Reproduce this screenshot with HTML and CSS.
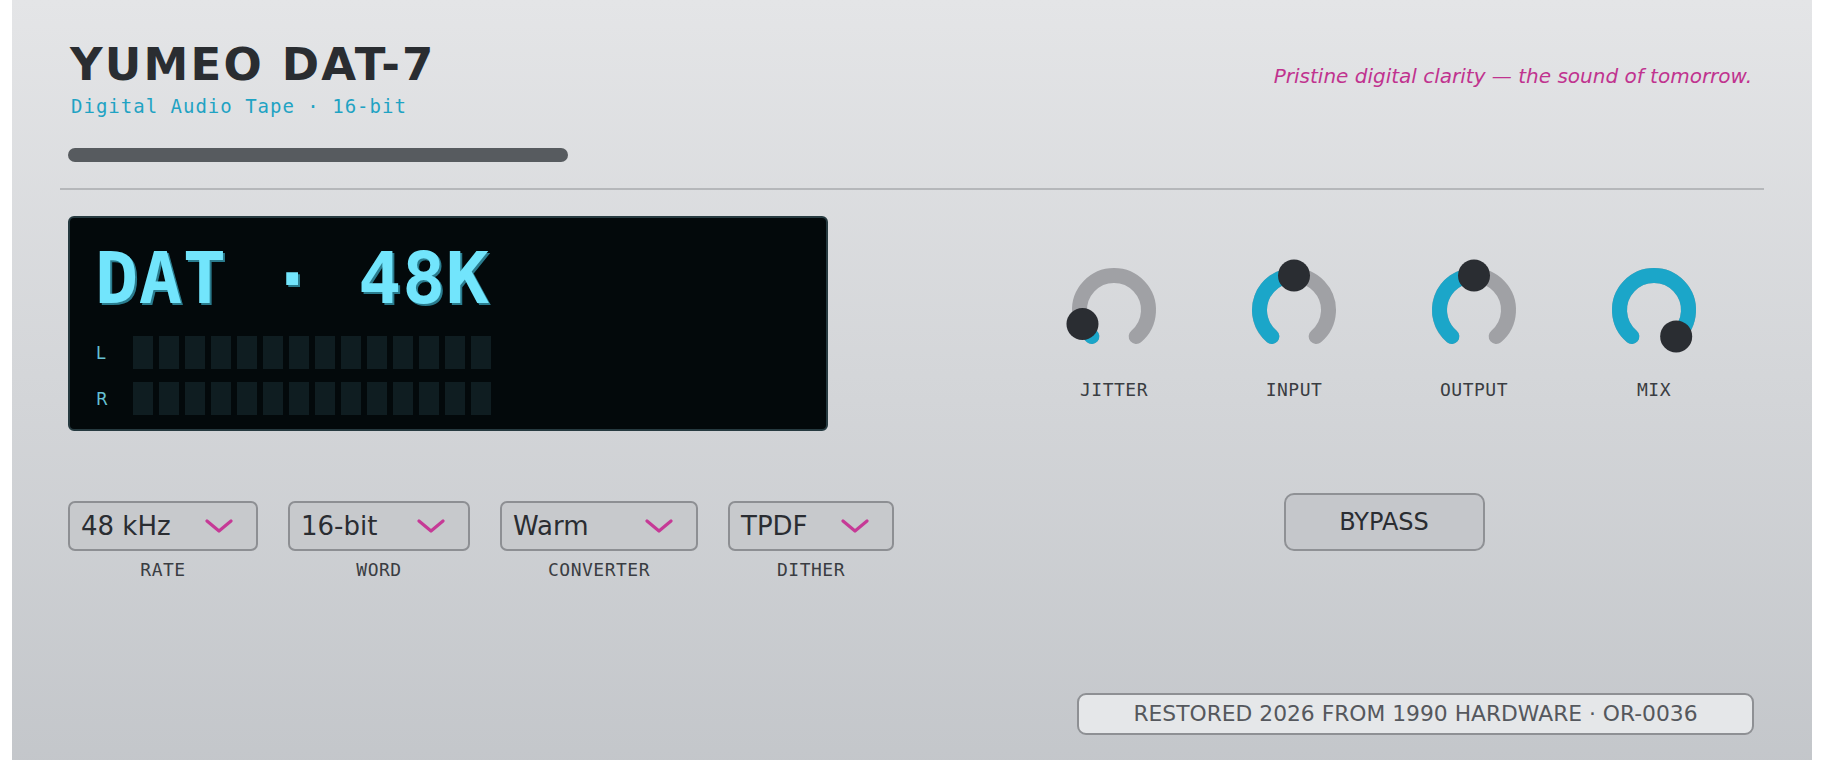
FILE: index.html
```html
<!DOCTYPE html>
<html lang="en">
<head>
<meta charset="UTF-8" />
<title>Yumeo DAT-7</title>
<link rel="stylesheet" href="styles.css">
</head>
<body>

<div class="unit">

  <header class="head">
    <div class="brand">
      <h1 class="title">YUMEO DAT-7</h1>
      <div class="subtitle">Digital Audio Tape · 16-bit</div>
      <div class="tape-bar"></div>
    </div>
    <p class="tagline">Pristine digital clarity — the sound of tomorrow.</p>
  </header>

  <div class="rule"></div>

  <main class="deck">

    <section class="left">
      <!-- LCD readout -->
      <div class="lcd">
        <div class="lcd-text">DAT · 48K</div>
        <div class="meter">
          <span class="ch">L</span>
          <div class="segs"><i></i><i></i><i></i><i></i><i></i><i></i><i></i><i></i><i></i><i></i><i></i><i></i><i></i><i></i></div>
        </div>
        <div class="meter">
          <span class="ch">R</span>
          <div class="segs"><i></i><i></i><i></i><i></i><i></i><i></i><i></i><i></i><i></i><i></i><i></i><i></i><i></i><i></i></div>
        </div>
      </div>

      <!-- selectors -->
      <div class="selects">
        <div class="field field-rate">
          <div class="select"><span>48 kHz</span>
            <svg class="chev" width="28" height="14" viewBox="0 0 28 14"><polyline points="2,2 14,12 26,2" /></svg>
          </div>
          <span class="cap">RATE</span>
        </div>
        <div class="field field-word">
          <div class="select"><span>16-bit</span>
            <svg class="chev" width="28" height="14" viewBox="0 0 28 14"><polyline points="2,2 14,12 26,2" /></svg>
          </div>
          <span class="cap">WORD</span>
        </div>
        <div class="field field-conv">
          <div class="select"><span>Warm</span>
            <svg class="chev" width="28" height="14" viewBox="0 0 28 14"><polyline points="2,2 14,12 26,2" /></svg>
          </div>
          <span class="cap">CONVERTER</span>
        </div>
        <div class="field field-dither">
          <div class="select"><span>TPDF</span>
            <svg class="chev" width="28" height="14" viewBox="0 0 28 14"><polyline points="2,2 14,12 26,2" /></svg>
          </div>
          <span class="cap">DITHER</span>
        </div>
      </div>
    </section>

    <section class="right">
      <div class="knobs">
        <div class="knob">
          <svg width="120" height="120" viewBox="0 0 120 120">
            <path class="track" d="M37.82 86.43 A34.5 34.5 0 1 1 82.18 86.43" />
            <path class="value" d="M37.82 86.43 A34.5 34.5 0 0 1 28.48 74.03" />
            <circle class="handle" cx="28.48" cy="74.03" r="16" />
          </svg>
          <span class="cap">JITTER</span>
        </div>
        <div class="knob">
          <svg width="120" height="120" viewBox="0 0 120 120">
            <path class="track" d="M37.82 86.43 A34.5 34.5 0 1 1 82.18 86.43" />
            <path class="value" d="M37.82 86.43 A34.5 34.5 0 0 1 60 25.5" />
            <circle class="handle" cx="60" cy="25.5" r="16" />
          </svg>
          <span class="cap">INPUT</span>
        </div>
        <div class="knob">
          <svg width="120" height="120" viewBox="0 0 120 120">
            <path class="track" d="M37.82 86.43 A34.5 34.5 0 1 1 82.18 86.43" />
            <path class="value" d="M37.82 86.43 A34.5 34.5 0 0 1 60 25.5" />
            <circle class="handle" cx="60" cy="25.5" r="16" />
          </svg>
          <span class="cap">OUTPUT</span>
        </div>
        <div class="knob">
          <svg width="120" height="120" viewBox="0 0 120 120">
            <path class="track" d="M37.82 86.43 A34.5 34.5 0 1 1 82.18 86.43" />
            <path class="value" d="M37.82 86.43 A34.5 34.5 0 1 1 82.18 86.43" />
            <circle class="handle" cx="82.18" cy="86.43" r="16" />
          </svg>
          <span class="cap">MIX</span>
        </div>
      </div>
      <button class="bypass" type="button">BYPASS</button>
    </section>

  </main>

  <footer class="foot">
    <div class="badge">RESTORED 2026 FROM 1990 HARDWARE · OR-0036</div>
  </footer>

</div>

</body>
</html>
```

FILE: styles.css
```css
body {
  margin: 0;
  background: #fff;
  font-family: "DejaVu Sans", Verdana, sans-serif;
  color: #2a2d32;
}
.unit {
  max-width: 1800px;
  min-height: 100vh;
  margin: 0 auto;
  padding: 40px 48px 40px 56px;
  box-sizing: border-box;
  background: linear-gradient(#e4e5e7, #c3c6ca);
}

/* header */
.head {
  display: flex;
  justify-content: space-between;
  align-items: flex-start;
}
.title {
  margin: 0 0 0 2px;
  font-size: 45px;
  line-height: 49px;
  font-weight: bold;
  letter-spacing: 2.2px;
  color: #2a2d31;
}
.subtitle {
  margin-top: 6px;
  padding-left: 3px;
  font-family: "DejaVu Sans Mono", monospace;
  font-size: 19px;
  line-height: 22px;
  letter-spacing: 1px;
  color: #1fa3c3;
}
.tape-bar {
  width: 500px;
  height: 14px;
  margin-top: 31px;
  border-radius: 7px;
  background: #575b5f;
}
.tagline {
  margin: 25px 12px 0 0;
  font-size: 20px;
  line-height: 22px;
  font-style: italic;
  color: #c0338f;
}
.rule {
  height: 2px;
  margin: 26px 0 26px -8px;
  background: #b5b7ba;
}

/* main deck */
.deck {
  display: grid;
  grid-template-columns: 936px 1fr;
}

.lcd {
  width: 760px;
  height: 215px;
  box-sizing: border-box;
  padding: 24px 25px 0;
  border: 2px solid #263a40;
  border-radius: 6px;
  background: #03090b;
}
.lcd-text {
  font-family: "DejaVu Sans Mono", monospace;
  font-weight: bold;
  font-size: 72px;
  line-height: 72px;
  letter-spacing: 0.5px;
  color: #72e5fc;
  text-shadow: 2px 2px 0 #2a7c8e;
  white-space: pre;
}
.meter {
  display: flex;
  align-items: center;
  height: 33px;
  margin-top: 13px;
}
.lcd-text + .meter {
  margin-top: 22px;
}
.ch {
  width: 37px;
  padding-left: 1px;
  font-size: 17px;
  color: #66c1d4;
}
.segs {
  display: flex;
  gap: 6px;
  height: 100%;
}
.segs i {
  width: 20px;
  background: #0f1d21;
}

.selects {
  display: flex;
  gap: 30px;
  margin-top: 70px;
}
.field {
  display: flex;
  flex-direction: column;
  align-items: center;
}
.select {
  display: flex;
  align-items: center;
  justify-content: space-between;
  height: 50px;
  box-sizing: border-box;
  padding: 0 23px 0 11px;
  border: 2px solid #8d8f93;
  border-radius: 7px;
  background: #c7c9cc;
  font-size: 26px;
  color: #2a2d32;
}
.field-rate .select { width: 190px; }
.field-word .select { width: 182px; }
.field-conv .select { width: 198px; }
.field-dither .select { width: 166px; }
.chev polyline {
  fill: none;
  stroke: #c63a96;
  stroke-width: 3.2;
  stroke-linecap: round;
  stroke-linejoin: round;
}
.cap {
  font-family: "DejaVu Sans Mono", monospace;
  font-size: 18px;
  line-height: 21px;
  letter-spacing: 0.5px;
  color: #3a3d42;
}
.field .cap {
  margin-top: 8px;
}

/* knobs */
.right {
  display: flex;
  flex-direction: column;
  align-items: center;
}
.knobs {
  display: flex;
  margin-top: 34px;
}
.knob {
  width: 180px;
  display: flex;
  flex-direction: column;
  align-items: center;
}
.knob svg {
  overflow: visible;
}
.knob .cap {
  margin-top: 9px;
}
.track, .value {
  fill: none;
  stroke-width: 15;
  stroke-linecap: round;
}
.track { stroke: #a0a1a5; }
.value { stroke: #1ba6c9; }
.handle { fill: #2a2d32; }

.bypass {
  width: 201px;
  height: 58px;
  margin-top: 93px;
  border: 2px solid #8f9195;
  border-radius: 10px;
  background: #c5c7cb;
  font-family: "DejaVu Sans", Verdana, sans-serif;
  font-size: 24px;
  color: #2a2d32;
  cursor: pointer;
}

/* footer */
.foot {
  display: flex;
  justify-content: flex-end;
  margin-top: 113px;
  padding-right: 10px;
}
.badge {
  width: 677px;
  height: 42px;
  box-sizing: border-box;
  border: 2px solid #8e9094;
  border-radius: 9px;
  background: #e5e7e9;
  text-align: center;
  font-size: 21.8px;
  line-height: 38px;
  color: #55585d;
}
```
